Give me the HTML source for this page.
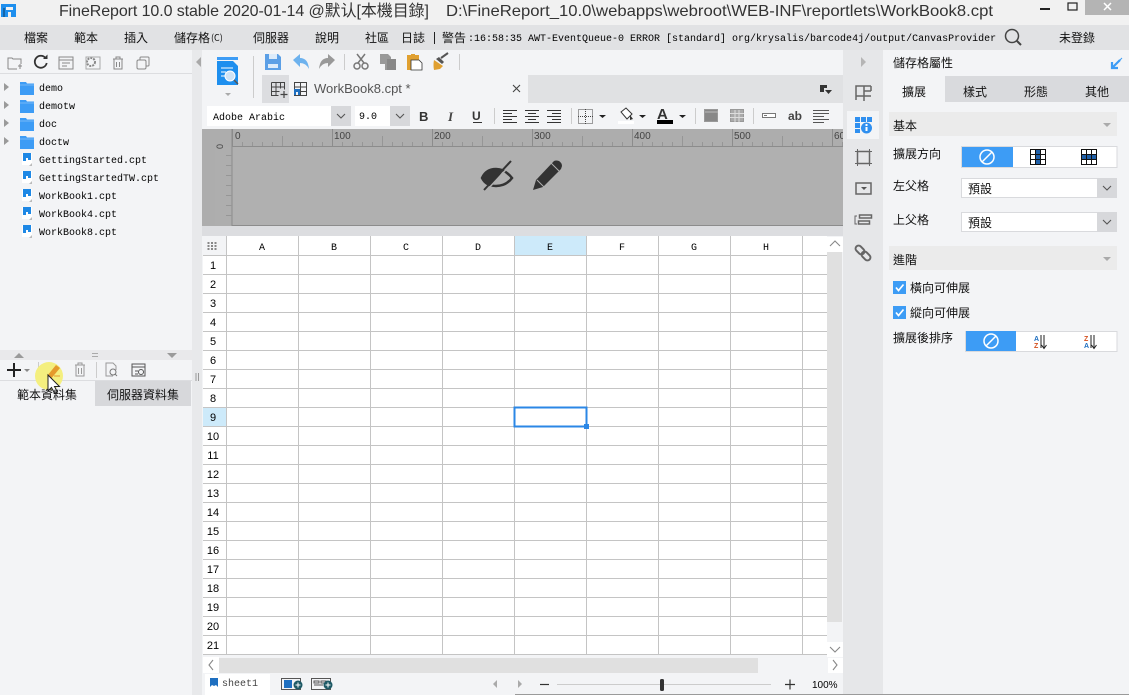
<!DOCTYPE html>
<html><head><meta charset="utf-8"><style>
html,body{margin:0;padding:0;background:#f3f4f6;width:1129px;height:695px;overflow:hidden}
svg{display:block}
text{font-family:"Liberation Sans","Noto Sans CJK TC",sans-serif;font-size:12px;fill:#222}
.c{font-family:"Noto Sans CJK TC","Liberation Sans",sans-serif;font-size:12px;fill:#111}
.m{font-family:"Liberation Mono","Noto Sans CJK TC",monospace;font-size:10px;fill:#000}
.h{font-family:"Liberation Mono",monospace;font-size:10px;fill:#000;text-anchor:middle}
.n{font-family:"Liberation Sans",sans-serif;font-size:11px;fill:#000;text-anchor:middle}
.r{font-family:"Liberation Sans",sans-serif;font-size:10px;fill:#444}
</style></head><body>
<svg width="1129" height="695" viewBox="0 0 1129 695" xmlns="http://www.w3.org/2000/svg">
<defs>
<g id="fld"><path d="M0 1h6l1 1.500h7v11.500h-14z" fill="#3d9cf5"/><path d="M0 4h14" stroke="#9ccdfa" stroke-width=".6"/></g>
<g id="arr"><path d="M-3-4l5 4-5 4z" fill="#9a9a9a"/></g>
<g id="fil"><rect x="0" y="0" width="10" height="12" fill="#fff"/><path d="M1 0h8v7h-3v-2h-2v3h-3z" fill="#1e88e5"/><path d="M10 10l-3 3h3z" fill="#bbb"/></g>
<g id="no"><circle cx="0" cy="0" r="7" fill="none" stroke="#fff" stroke-width="1.500"/><path d="M-5 5L5-5" stroke="#fff" stroke-width="1.500"/></g>
<g id="chev"><path d="M-4-2l4 4 4-4" fill="none" stroke="#555" stroke-width="1.100"/></g>
<g id="chk"><rect width="13" height="13" fill="#3d9cf5"/><path d="M3 6.500l2.500 3 5-6" fill="none" stroke="#fff" stroke-width="1.700"/></g>
</defs>

<!-- base areas -->
<rect width="1129" height="695" fill="#f3f4f6"/>
<rect width="1129" height="25" fill="#f1f1f1"/>
<rect y="25" width="1129" height="25" fill="#e1e2e4"/>
<rect x="192" y="50" width="10" height="645" fill="#e8e9eb"/>
<rect x="1085" width="44" height="15" fill="#b4b4b4"/>

<!-- title -->
<path d="M1 4h15v13h-5v-5h-3v5h-7z" fill="#1e8fee"/><path d="M6 7h7v3h-7z" fill="#f1f1f1"/><rect x="3" y="8" width="2" height="9" fill="#1565a8"/>
<text x="59" y="16" textLength="370" lengthAdjust="spacing" style="font-size:16px;fill:#333">FineReport 10.0 stable 2020-01-14 @默认[本機目錄]</text>
<text x="446" y="16" textLength="547" lengthAdjust="spacingAndGlyphs" style="font-size:16px;fill:#333">D:\FineReport_10.0\webapps\webroot\WEB-INF\reportlets\WorkBook8.cpt</text>
<rect x="1040" y="8" width="10" height="2" fill="#222"/>
<rect x="1068" y="3" width="9" height="7" fill="none" stroke="#222" stroke-width="1.200"/>
<path d="M1104 3l7 7M1111 3l-7 7" stroke="#fff" stroke-width="1.500"/>

<!-- menu -->
<text class="c" x="24" y="42">檔案</text><text class="c" x="74" y="42">範本</text><text class="c" x="124" y="42">插入</text>
<text class="c" x="174" y="42">儲存格</text><text class="c" x="211" y="41" style="font-size:9px">(C)</text>
<text class="c" x="253" y="42">伺服器</text><text class="c" x="315" y="42">說明</text><text class="c" x="365" y="42">社區</text><text class="c" x="401" y="42">日誌</text>
<rect x="434" y="32" width="1" height="12" fill="#222"/>
<text class="c" x="442" y="42">警告</text>
<text class="m" x="468" y="41">:16:58:35 AWT-EventQueue-0 ERROR [standard] org/krysalis/barcode4j/output/CanvasProvider</text>
<circle cx="1012" cy="36" r="6.500" fill="none" stroke="#444" stroke-width="1.500"/><path d="M1017 41l4 4" stroke="#444" stroke-width="2"/>
<text class="c" x="1059" y="42">未登錄</text>

<!-- left toolbar -->
<rect x="0" y="73" width="192" height="1" fill="#dcdde0"/>
<g fill="none" stroke="#888" stroke-width="1">
<path d="M8 69v-11h4l1 1h8v5M8 69h9M18 66h4M20 64v5"/>
<rect x="59" y="57" width="14" height="12"/><path d="M59 60h14M62 63h8M62 66h5"/>
<circle cx="91" cy="62" r="4" stroke-width="2" stroke-dasharray="2 1"/><rect x="86" y="57" width="14" height="12" stroke="#aaa"/>
<path d="M113 59h10M116 59v-2h4v2M114 59v10h8v-10M116.500 62v5M119.500 62v5"/>
<rect x="137" y="60" width="9" height="9" rx="1.500"/><path d="M140 60v-2q0-1 1-1h7q1 0 1 1v7q0 1-1 1h-2"/>
</g>
<path d="M45.500 58a6 6 0 1 0 1.200 5" fill="none" stroke="#333" stroke-width="1.800"/><path d="M43 59h4.500v-4.500z" fill="#333"/>
<path d="M201 57l-5 5 5 5z" fill="#a9a9a9"/>

<!-- tree -->
<use href="#arr" x="7" y="87"/><use href="#arr" x="7" y="105"/><use href="#arr" x="7" y="123"/><use href="#arr" x="7" y="141"/>
<use href="#fld" x="20" y="81"/><use href="#fld" x="20" y="99"/><use href="#fld" x="20" y="117"/><use href="#fld" x="20" y="135"/>
<text class="m" x="39" y="91">demo</text><text class="m" x="39" y="109">demotw</text><text class="m" x="39" y="127">doc</text><text class="m" x="39" y="145">doctw</text>
<use href="#fil" x="22" y="153"/><use href="#fil" x="22" y="171"/><use href="#fil" x="22" y="189"/><use href="#fil" x="22" y="207"/><use href="#fil" x="22" y="225"/>
<text class="m" x="39" y="163">GettingStarted.cpt</text><text class="m" x="39" y="181">GettingStartedTW.cpt</text><text class="m" x="39" y="199">WorkBook1.cpt</text><text class="m" x="39" y="217">WorkBook4.cpt</text><text class="m" x="39" y="235">WorkBook8.cpt</text>

<!-- split & dataset toolbar -->
<rect y="350" width="192" height="10" fill="#e9e9eb"/>
<path d="M14 358l5-5 5 5z" fill="#9a9a9a"/><path d="M167 353h10l-5 5z" fill="#9a9a9a"/><path d="M92 353.500h6M92 356.500h6" stroke="#aaa"/>
<path d="M196 373v8M198.500 373v8" stroke="#999"/>
<path d="M7 370h14M14 363v14" stroke="#222" stroke-width="2"/><path d="M24 369h6l-3 3z" fill="#888"/>
<rect x="38" y="362" width="1" height="16" fill="#ccc"/><rect x="96" y="362" width="1" height="16" fill="#ccc"/>
<g fill="none" stroke="#999">
<path d="M75 365h10M78 365v-2h4v2M76 365v11h8v-11M78.500 368v6M81.500 368v6"/>
<path d="M113 376h-7v-13h7l3 3v4"/><circle cx="113" cy="372" r="3" stroke="#777"/><path d="M115 374l2 2" stroke="#777"/>
<path d="M132 376v-12h13v12z" stroke="#555"/><path d="M132 367h13M135 371h3M135 374h3" stroke="#555"/><circle cx="141" cy="372" r="2.500" stroke="#555"/>
</g>
<rect y="380" width="192" height="1" fill="#dcdde0"/>
<circle cx="49" cy="376" r="14" fill="#f4ef7f"/>
<path d="M47 376l9-11 4 3-10 12z" fill="#e59a2c"/><path d="M54 376h6" stroke="#e59a2c"/>
<path d="M48 375v16l3.500-3.500 3 6 3-1.500-3-5.500h5z" fill="#fff" stroke="#222" stroke-width="1"/>
<rect x="95" y="381" width="96" height="25" fill="#d7d8db"/>
<text class="c" x="17" y="399">範本資料集</text><text class="c" x="107" y="399">伺服器資料集</text>

<!-- top toolbars -->
<rect x="262" y="75" width="581" height="28" fill="#e0e1e3"/>
<rect x="262" y="75" width="27" height="28" fill="#dcdde0"/>
<rect x="289" y="75" width="239" height="28" fill="#f3f4f6"/>
<path d="M217 57h21v3h-21z" fill="#3d9cf5"/><path d="M217 61h16l5 5v19h-21z" fill="#1e8fee"/>
<path d="M221 68h12M221 72h5M221 76h4" stroke="#fff"/><circle cx="230" cy="76" r="5" fill="#cfe3f5" stroke="#fff"/><path d="M234 80l4 4" stroke="#555" stroke-width="1.500"/>
<path d="M225 93h6l-3 3z" fill="#aaa"/>
<rect x="253" y="56" width="1" height="42" fill="#ccc"/>
<path d="M265 54h13l3 3v13h-16z" fill="#5b9fe6"/><rect x="269" y="54" width="8" height="5" fill="#dcebfa"/><rect x="268" y="64" width="10" height="4" fill="#dcebfa"/>
<path d="M293 60l7-6v4q8 0 9 11-3-6-9-6v4z" fill="#6db2ee"/>
<path d="M335 60l-7-6v4q-8 0-9 11 3-6 9-6v4z" fill="#999"/>
<rect x="344" y="54" width="1" height="16" fill="#ccc"/>
<g fill="none" stroke="#777" stroke-width="1.500"><circle cx="357" cy="66" r="3"/><circle cx="365" cy="66" r="3"/><path d="M358 63l7-9M364 63l-7-9"/></g>
<path d="M380 54h8l3 3v7h5v2h-3v4h-8v-6h-5z" fill="#999"/><rect x="387" y="59" width="9" height="11" fill="#888"/>
<path d="M407 55h4v-1h4v1h4v8h-8v7h-4z" fill="#e0a030"/><path d="M411 60h8l3 3v7h-11z" fill="#fff" stroke="#333" stroke-width=".8"/>
<path d="M434 60l9 6-3 3-6 1q-1-5 0-10z" fill="#e0a030"/><path d="M436 59l6 5 2-2-5-5z" fill="#555"/><path d="M441 58l7-5" stroke="#555" stroke-width="2"/>
<rect x="459" y="54" width="1" height="16" fill="#ccc"/>
<g fill="none" stroke="#444"><path d="M271.500 82.500h13v7M271.500 82.500v13h7M271.500 87h13M271.500 91.500h8M276 82.500v13M280.500 82.500v6"/><path d="M284 91v7M280.500 94.500h7" stroke-width="1.200"/>
<path d="M294.500 82.500h12v13h-12zM294.500 87h12M294.500 91.500h12M300.500 82.500v13"/></g>
<path d="M294 89h6v6h-2v-3h-2v3h-2z" fill="#1e6fc0"/>
<text x="314" y="93" style="font-size:13px;fill:#555">WorkBook8.cpt *</text>
<path d="M513 85l7 7M520 85l-7 7" stroke="#444" stroke-width="1.100"/>
<path d="M820 85h7v3h-3v4h-4z" fill="#333"/><path d="M825 90h7l-3.500 4z" fill="#333"/>

<!-- format bar -->
<rect x="207" y="106" width="124" height="20" fill="#fff"/><rect x="331" y="106" width="20" height="20" fill="#d7d8db"/>
<text class="m" x="213" y="120">Adobe Arabic</text><use href="#chev" x="341" y="116"/>
<rect x="355" y="106" width="35" height="20" fill="#fff"/><rect x="390" y="106" width="20" height="20" fill="#d7d8db"/>
<text class="m" x="359" y="119">9.0</text><use href="#chev" x="400" y="116"/>
<text x="419" y="121" style="font-size:13px;font-weight:bold;fill:#333">B</text>
<text x="448" y="121" style="font-size:13px;font-style:italic;font-family:'Liberation Serif';font-weight:bold;fill:#444">I</text>
<text x="472" y="120" style="font-size:12px;font-weight:bold;fill:#333">U</text><rect x="473" y="122" width="9" height="1" fill="#333"/>
<rect x="494" y="108" width="1" height="16" fill="#ccc"/>
<path d="M503 110.500h14M503 113.500h9M503 116.500h14M503 119.500h9M503 122.500h14M525 110.500h14M528 113.500h8M525 116.500h14M528 119.500h8M525 122.500h14M547 110.500h14M552 113.500h9M547 116.500h14M552 119.500h9M547 122.500h14" stroke="#333" fill="none"/>
<rect x="571" y="108" width="1" height="16" fill="#ccc"/>
<g fill="none" stroke="#444" stroke-dasharray="1 1"><rect x="578.500" y="109.500" width="14" height="14"/><path d="M585.500 109v15M578 116.500h15"/></g>
<path d="M599 115h7l-3.500 3z" fill="#222"/>
<path d="M621 112l5-4 6 6-5 5z" fill="#fff" stroke="#333"/><path d="M630 115l3 4-3 1z" fill="#333"/><rect x="618" y="121" width="16" height="3" fill="#fff"/>
<path d="M639 115h7l-3.500 3z" fill="#222"/>
<text x="657" y="119" style="font-size:15px;font-weight:bold;fill:#333">A</text><rect x="657" y="120" width="16" height="4" fill="#000"/>
<path d="M679 115h7l-3.500 3z" fill="#222"/>
<rect x="695" y="108" width="1" height="16" fill="#ccc"/>
<rect x="704.500" y="109.500" width="13" height="12" fill="#888" stroke="#999"/><path d="M705 112h13" stroke="#bbb"/>
<g stroke="#999" fill="#aaa"><rect x="730.500" y="109.500" width="13" height="12"/><path d="M730 113.500h14M730 117.500h14M735 110v12M739 110v12" stroke="#ddd"/></g>
<rect x="753" y="108" width="1" height="16" fill="#ccc"/>
<rect x="762.500" y="113.500" width="13" height="4" fill="#fff" stroke="#777"/><path d="M764 115.500h3" stroke="#777"/>
<text x="788" y="120" style="font-size:12px;font-weight:bold;fill:#444">ab</text>
<path d="M813 110.500h16M813 113.500h16M813 116.500h11M813 119.500h16M813 122.500h11" stroke="#555"/>

<!-- report header ruler -->
<rect x="202" y="129" width="641" height="97" fill="#b0b0b0"/>
<rect x="202" y="129" width="641" height="18" fill="#adadad"/>
<rect x="202" y="129" width="30" height="97" fill="#adadad"/>
<rect x="215" y="147" width="15" height="78" fill="#b0b0b0" opacity=".5"/>
<path d="M232 129v97M232 146.500h611M232 225.500h611" stroke="#8c8c8c"/>
<path d="M232 144h611" stroke="#969696" stroke-width="4" stroke-dasharray="1 9"/>
<path d="M232 141h611" stroke="#969696" stroke-width="10" stroke-dasharray="1 49"/>
<path d="M232 137.500h611" stroke="#8c8c8c" stroke-width="17" stroke-dasharray="1 99"/>
<path d="M229 155v70" stroke="#969696" stroke-width="6" stroke-dasharray="1 9"/>
<text class="r" x="235" y="139">0</text><text class="r" x="334" y="139">100</text><text class="r" x="434" y="139">200</text><text class="r" x="534" y="139">300</text><text class="r" x="634" y="139">400</text><text class="r" x="734" y="139">500</text><text class="r" x="834" y="139">60</text>
<text class="r" transform="translate(218,149) rotate(-90)" x="0" y="5" style="font-size:9px">0</text>
<g fill="#333">
<path d="M482 178q4-9 14-9 9 0 16 9-6 8-16 8-10 0-14-8z" fill="none" stroke="#333" stroke-width="2.500"/>
<path d="M483 178q3-9 13-9l7 2-11 15q-7-2-9-8z"/><path d="M484 190l27-29" stroke="#333" stroke-width="2"/><path d="M487 190l27-29" stroke="#b0b0b0" stroke-width="1.500"/>
<path d="M533 190l3-10 18-19q2-1 5 0 3 2 3 5l-1 3-18 18z" fill="#333"/><path d="M537 180l8 8M551 163l8 8" stroke="#b0b0b0"/>
</g>
<rect x="202" y="226" width="641" height="10" fill="#dcdde0"/>

<!-- right strip bg (drawn after ruler) -->
<rect x="843" y="50" width="40" height="645" fill="#e6e7e9"/>

<!-- grid -->
<rect x="203" y="236" width="624" height="419" fill="#fff"/>
<rect x="203" y="236" width="24" height="19" fill="#f3f4f6"/>
<path d="M207.500 243h9M207.500 246h9M207.500 249h9" stroke="#888" stroke-width="2" stroke-dasharray="2 1.500"/>
<rect x="514" y="236" width="73" height="19" fill="#cdeafa"/>
<rect x="203" y="407" width="23" height="19" fill="#cdeafa"/>
<path d="M226.500 236v419M298.500 236v419M370.500 236v419M442.500 236v419M514.500 236v419M586.500 236v419M658.500 236v419M730.500 236v419M802.500 236v419M203 255.500h624M203 274.500h624M203 293.500h624M203 312.500h624M203 331.500h624M203 350.500h624M203 369.500h624M203 388.500h624M203 407.500h624M203 426.500h624M203 445.500h624M203 464.500h624M203 483.500h624M203 502.500h624M203 521.500h624M203 540.500h624M203 559.500h624M203 578.500h624M203 597.500h624M203 616.500h624M203 635.500h624M203 654.500h624" stroke="#c4c4c4" fill="none"/>
<text class="h" x="262" y="250">A</text><text class="h" x="334" y="250">B</text><text class="h" x="406" y="250">C</text><text class="h" x="478" y="250">D</text><text class="h" x="550" y="250">E</text><text class="h" x="622" y="250">F</text><text class="h" x="694" y="250">G</text><text class="h" x="766" y="250">H</text>
<text class="n" x="213" y="269">1</text><text class="n" x="213" y="288">2</text><text class="n" x="213" y="307">3</text><text class="n" x="213" y="326">4</text><text class="n" x="213" y="345">5</text><text class="n" x="213" y="364">6</text><text class="n" x="213" y="383">7</text><text class="n" x="213" y="402">8</text><text class="n" x="213" y="421">9</text><text class="n" x="213" y="440">10</text><text class="n" x="213" y="459">11</text><text class="n" x="213" y="478">12</text><text class="n" x="213" y="497">13</text><text class="n" x="213" y="516">14</text><text class="n" x="213" y="535">15</text><text class="n" x="213" y="554">16</text><text class="n" x="213" y="573">17</text><text class="n" x="213" y="592">18</text><text class="n" x="213" y="611">19</text><text class="n" x="213" y="630">20</text><text class="n" x="213" y="649">21</text>
<rect x="514.500" y="407.500" width="72" height="19" fill="none" stroke="#2b87e6" stroke-width="2"/>
<rect x="584" y="424" width="5" height="5" fill="#2b87e6"/>

<!-- scrollbars -->
<rect x="827" y="236" width="16" height="421" fill="#f3f4f6"/>
<rect x="827" y="237" width="16" height="15" fill="#fff"/>
<path d="M830 246l5-5 5 5" fill="none" stroke="#888" stroke-width="1.100"/>
<rect x="827" y="252" width="15" height="370" fill="#e0e0e0"/>
<rect x="827" y="642" width="16" height="15" fill="#fff"/>
<path d="M830 647l5 5 5-5" fill="none" stroke="#888" stroke-width="1.100"/>
<rect x="202" y="657" width="641" height="16" fill="#f3f4f6"/>
<rect x="203" y="657" width="16" height="16" fill="#fff"/>
<path d="M213 660l-4 5 4 5" fill="none" stroke="#888" stroke-width="1.100"/>
<rect x="219" y="658" width="539" height="15" fill="#e0e0e0"/>
<rect x="828" y="658" width="15" height="16" fill="#fff"/>
<path d="M833 660l4 5-4 5" fill="none" stroke="#888" stroke-width="1.100"/>

<!-- sheet bar -->
<rect x="202" y="673" width="641" height="22" fill="#f3f4f6"/>
<rect x="205" y="674" width="65" height="21" fill="#fff"/>
<path d="M210 678h8v9l-2-2-2 1-2-1-2 2z" fill="#1e6fc0"/>
<text class="m" x="222" y="686" style="fill:#444">sheet1</text>
<rect x="281.500" y="678.500" width="19" height="11" fill="none" stroke="#555"/><path d="M284 680h8v8h-8z" fill="#1e6fc0"/>
<circle cx="298" cy="685" r="4.500" fill="#1e5a66"/><path d="M295.500 685h5M298 682.500v5" stroke="#fff"/>
<rect x="311.500" y="678.500" width="19" height="11" fill="none" stroke="#555"/><path d="M314 681h5v2h-5zM321 681h5v2h-5zM314 685h9" stroke="#555" fill="none"/>
<circle cx="328" cy="685" r="4.500" fill="#1e5a66"/><path d="M325.500 685h5M328 682.500v5" stroke="#fff"/>
<path d="M497 680l-4 4 4 4zM518 680l4 4-4 4z" fill="#aaa"/>
<path d="M540 684.500h9" stroke="#333" stroke-width="1.200"/>
<path d="M557 684.500h214" stroke="#ccc"/>
<rect x="660" y="679" width="4" height="12" rx="1.500" fill="#333"/>
<path d="M785 684.500h10M790 679.500v10" stroke="#333" stroke-width="1.200"/>
<text class="m" x="812" y="688" style="font-family:'Liberation Sans';font-size:10px">100%</text>
<rect x="515" y="694" width="614" height="1" fill="#9a9a9a"/>

<!-- right strip -->
<path d="M861 57l5 5-5 5z" fill="#b5b5b5"/>
<g fill="none" stroke="#666" stroke-width="1.500">
<path d="M856 100v-14h15M871 91h-7M871 96h-7v5M864 86v15M856 96h8M871 86v5"/>
<rect x="857.500" y="151.500" width="12" height="12"/><path d="M855 151.500h17M855 163.500h17M857.500 149v17M869.500 149v17" stroke-width="1"/>
<rect x="856" y="183" width="15" height="11"/>
<path d="M857 216h-2v8h2" stroke-width="1"/><rect x="859.500" y="215" width="12" height="3"/><rect x="858.500" y="221" width="11" height="3"/>
</g>
<g fill="none" stroke="#666" stroke-width="2">
<rect x="-5" y="-3" width="10" height="6" rx="3" transform="translate(860,250) rotate(45)"/>
<rect x="-5" y="-3" width="10" height="6" rx="3" transform="translate(866,256) rotate(45)"/>
</g>
<path d="M861 187h6l-3 3z" fill="#555"/>
<rect x="847" y="111" width="32" height="28" fill="#f3f4f6"/>
<path d="M855 117h5v5h-5zM861 117h5v5h-5zM867 117h5v5h-5zM855 123h5v5h-5zM855 129h5v4h-5z" fill="#2f8fef"/>
<circle cx="866.500" cy="128" r="5.500" fill="#2f8fef"/><path d="M865.500 127h2v4h-2zM865.500 124h2v2h-2z" fill="#fff"/>

<!-- right panel -->
<text class="c" x="893" y="67">儲存格屬性</text>
<path d="M1112 68l8-8M1112 62v6h6" fill="none" stroke="#3d9cf5" stroke-width="2.200"/><path d="M1122 58l-3 3" stroke="#3d9cf5"/>
<rect x="883" y="76" width="246" height="26" fill="#d9dadd"/>
<rect x="883" y="76" width="62" height="26" fill="#f3f4f6"/>
<text class="c" x="902" y="96">擴展</text><text class="c" x="963" y="96">樣式</text><text class="c" x="1024" y="96">形態</text><text class="c" x="1085" y="96">其他</text>

<rect x="889" y="112" width="228" height="24" fill="#ebebeb"/>
<text class="c" x="893" y="130">基本</text><path d="M1103 123h8l-4 4z" fill="#aaa"/>
<text class="c" x="893" y="158">擴展方向</text>
<rect x="961.500" y="146.500" width="155.500" height="21" fill="#fff" stroke="#d9dadd"/>
<rect x="962" y="147" width="51" height="20" fill="#3d9cf5"/><use href="#no" x="987" y="157"/>
<rect x="1036" y="150" width="4.500" height="14" fill="#1e5fa8"/><rect x="1082" y="155" width="14" height="4.500" fill="#1e5fa8"/>
<g fill="none" stroke="#111"><path d="M1030.500 149.500h15v15h-15zM1035.500 149.500v15M1040.500 149.500v15M1030.500 154.500h15M1030.500 159.500h15M1081.500 149.500h15v15h-15zM1086.500 149.500v15M1091.500 149.500v15M1081.500 154.500h15M1081.500 159.500h15"/></g>
<text class="c" x="893" y="190">左父格</text>
<rect x="961.500" y="178.500" width="136" height="19" fill="#fff" stroke="#d9dadd"/><rect x="1097" y="178" width="20" height="20" fill="#d7d8db"/><use href="#chev" x="1107" y="188"/>
<text class="c" x="968" y="193">預設</text>
<text class="c" x="893" y="224">上父格</text>
<rect x="961.500" y="212.500" width="136" height="19" fill="#fff" stroke="#d9dadd"/><rect x="1097" y="212" width="20" height="20" fill="#d7d8db"/><use href="#chev" x="1107" y="222"/>
<text class="c" x="968" y="227">預設</text>

<rect x="889" y="246" width="228" height="24" fill="#ebebeb"/>
<text class="c" x="893" y="264">進階</text><path d="M1103 257h8l-4 4z" fill="#aaa"/>
<use href="#chk" x="893" y="281"/><text class="c" x="910" y="292">橫向可伸展</text>
<use href="#chk" x="893" y="306"/><text class="c" x="910" y="317">縱向可伸展</text>
<text class="c" x="893" y="342">擴展後排序</text>
<rect x="965.500" y="331.500" width="151.500" height="20" fill="#fff" stroke="#d9dadd"/>
<rect x="966" y="331" width="50" height="20" fill="#3d9cf5"/><use href="#no" x="991" y="341"/>
<text x="1034" y="341" style="font-size:7px;font-weight:bold;fill:#1e6fc0">A</text><text x="1034" y="348" style="font-size:7px;font-weight:bold;fill:#d4501e">Z</text>
<path d="M1044 335v13M1041.500 345l2.500 3.500 2.500-3.500" fill="none" stroke="#222"/><path d="M1041 335v13" stroke="#222"/>
<text x="1084" y="341" style="font-size:7px;font-weight:bold;fill:#d4501e">Z</text><text x="1084" y="348" style="font-size:7px;font-weight:bold;fill:#1e6fc0">A</text>
<path d="M1094 335v13M1091.500 345l2.500 3.500 2.500-3.500" fill="none" stroke="#222"/><path d="M1091 335v13" stroke="#222"/>
</svg>
</body></html>
